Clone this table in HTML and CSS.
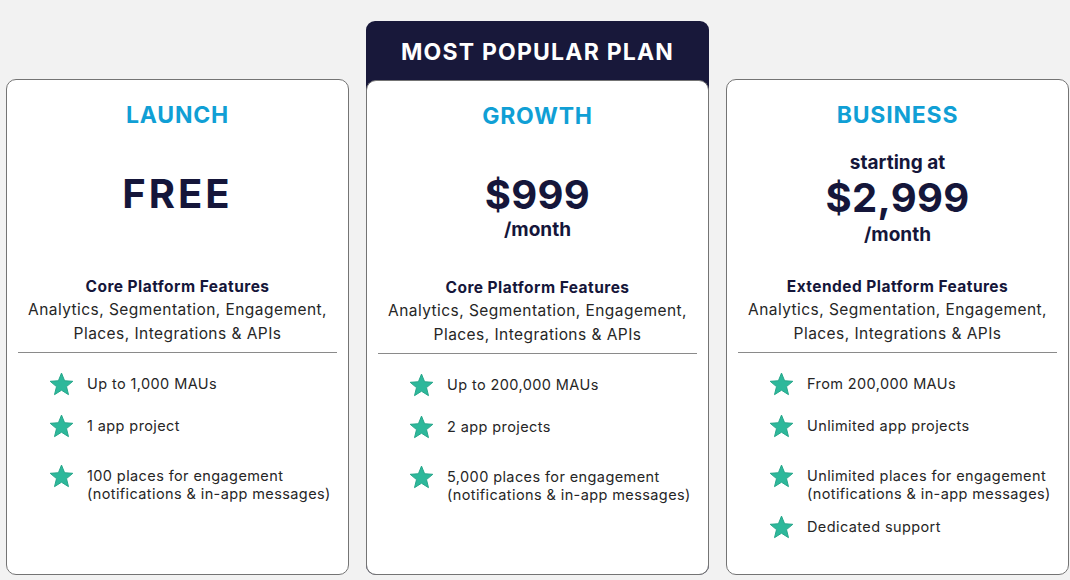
FILE: index.html
```html
<!DOCTYPE html>
<html lang="en">
<head>
<meta charset="utf-8">
<title>Pricing plans</title>
<link rel="stylesheet" href="styles.css">
</head>
<body>
<svg width="0" height="0" class="defs" aria-hidden="true">
  <defs>
    <symbol id="star" viewBox="-0.6 0 25.2 24">
      <path d="M12 1 L15.12 8.71 L23.41 9.29 L17.04 14.64 L19.05 22.71 L12 18.3 L4.95 22.71 L6.96 14.64 L0.59 9.29 L8.88 8.71 Z" fill="#2db89b" stroke="#25a68a" stroke-width="1" stroke-linejoin="round"/>
    </symbol>
  </defs>
</svg>
<main class="plans">
  <section class="plan">
    <div class="card">
      <h2 class="plan-name">LAUNCH</h2>
      <div class="price">
        <div class="amount amount--word">FREE</div>
      </div>
      <div class="summary">
        <h3 class="summary-title">Core Platform Features</h3>
        <p class="summary-text">Analytics, Segmentation, Engagement,<br>Places, Integrations &amp; APIs</p>
      </div>
      <ul class="features">
        <li class="feature"><svg class="star"><use href="#star"/></svg><span>Up to 1,000 MAUs</span></li>
        <li class="feature"><svg class="star"><use href="#star"/></svg><span>1 app project</span></li>
        <li class="feature feature--long"><svg class="star"><use href="#star"/></svg><span>100 places for engagement<br>(notifications &amp; in-app messages)</span></li>
      </ul>
    </div>
  </section>

  <section class="plan plan--popular">
    <div class="badge">MOST POPULAR PLAN</div>
    <div class="card">
      <h2 class="plan-name">GROWTH</h2>
      <div class="price">
        <div class="amount">$999</div>
        <div class="period">/month</div>
      </div>
      <div class="summary">
        <h3 class="summary-title">Core Platform Features</h3>
        <p class="summary-text">Analytics, Segmentation, Engagement,<br>Places, Integrations &amp; APIs</p>
      </div>
      <ul class="features">
        <li class="feature"><svg class="star"><use href="#star"/></svg><span>Up to 200,000 MAUs</span></li>
        <li class="feature"><svg class="star"><use href="#star"/></svg><span>2 app projects</span></li>
        <li class="feature feature--long"><svg class="star"><use href="#star"/></svg><span>5,000 places for engagement<br>(notifications &amp; in-app messages)</span></li>
      </ul>
    </div>
  </section>

  <section class="plan">
    <div class="card">
      <h2 class="plan-name">BUSINESS</h2>
      <div class="price price--from">
        <div class="period">starting at</div>
        <div class="amount">$2,999</div>
        <div class="period">/month</div>
      </div>
      <div class="summary">
        <h3 class="summary-title">Extended Platform Features</h3>
        <p class="summary-text">Analytics, Segmentation, Engagement,<br>Places, Integrations &amp; APIs</p>
      </div>
      <ul class="features">
        <li class="feature"><svg class="star"><use href="#star"/></svg><span>From 200,000 MAUs</span></li>
        <li class="feature"><svg class="star"><use href="#star"/></svg><span>Unlimited app projects</span></li>
        <li class="feature feature--long"><svg class="star"><use href="#star"/></svg><span>Unlimited places for engagement<br>(notifications &amp; in-app messages)</span></li>
        <li class="feature"><svg class="star"><use href="#star"/></svg><span>Dedicated support</span></li>
      </ul>
    </div>
  </section>
</main>
</body>
</html>
```

FILE: styles.css
```css
* { box-sizing: border-box; }

html, body {
  margin: 0;
  padding: 0;
  background: #f2f2f2;
}

body {
  font-family: Inter, "Noto Sans", "Liberation Sans", sans-serif;
  color: #262626;
}

.defs { position: absolute; }

.plans {
  display: flex;
  align-items: flex-end;
  gap: 17px;
  padding: 21px 0 0 6px;
}

.plan {
  width: 343px;
  display: flex;
  flex-direction: column;
}

.plan--popular {
  background: #18183a;
  border-radius: 9px 9px 10px 10px;
}

.badge {
  height: 59px;
  display: flex;
  align-items: center;
  justify-content: center;
  color: #ffffff;
  font-weight: 700;
  font-size: 23px;
  letter-spacing: 1.2px;
  padding-top: 2px;
}

.card {
  height: 496px;
  background: #ffffff;
  border: 1.5px solid #747474;
  border-radius: 10px;
  padding-top: 21px;
  display: flex;
  flex-direction: column;
}

.plan--popular .card { height: 495px; }

.plan-name {
  margin: 0;
  text-align: center;
  font-size: 23px;
  line-height: 28px;
  font-weight: 700;
  color: #109fd5;
  letter-spacing: 0.8px;
}

.price {
  height: 147px;
  padding-top: 42px;
  display: flex;
  flex-direction: column;
  align-items: center;
  color: #15163a;
  font-weight: 700;
}

.price--from { padding-top: 22px; }

.amount {
  font-size: 40px;
  line-height: 46px;
  letter-spacing: 0.3px;
}

.amount--word { letter-spacing: 3px; }

.period {
  font-size: 19px;
  line-height: 24px;
}

.price--from .period:last-child { margin-top: 2px; }

.summary {
  margin: 0 11px;
  padding-bottom: 7px;
  border-bottom: 1.5px solid #8a8a8a;
  text-align: center;
}

.summary-title {
  margin: 0;
  font-size: 15.5px;
  line-height: 22px;
  font-weight: 700;
  letter-spacing: 0.45px;
  color: #15163a;
}

.summary-text {
  margin: 0;
  font-size: 15.5px;
  line-height: 23.5px;
  letter-spacing: 0.45px;
  color: #262626;
}

.features {
  list-style: none;
  margin: 0;
  padding: 22px 0 0 43px;
  display: flex;
  flex-direction: column;
}

.feature {
  display: flex;
  align-items: flex-start;
  gap: 13px;
  font-size: 14.5px;
  line-height: 18px;
  letter-spacing: 0.4px;
  margin-bottom: 21px;
}

.feature--long {
  margin-top: 8px;
  margin-bottom: 15px;
}

.star {
  width: 25px;
  height: 24px;
  flex: none;
  margin-top: -3px;
  margin-left: -1px;
}
```
